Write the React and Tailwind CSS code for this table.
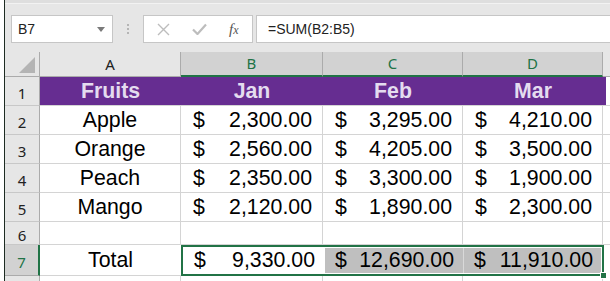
import React from "react";

const data = [
  ["Apple", "2,300.00", "3,295.00", "4,210.00"],
  ["Orange", "2,560.00", "4,205.00", "3,500.00"],
  ["Peach", "2,350.00", "3,300.00", "1,900.00"],
  ["Mango", "2,120.00", "1,890.00", "2,300.00"],
];

const cellFont = { fontFamily: '"Liberation Sans", Arial, sans-serif' };

function RowHead({ n, h, selected }) {
  return (
    <div
      className={`w-[35px] shrink-0 flex items-center justify-center border-b border-r box-border text-[15px] leading-none ${
        selected
          ? "bg-[#d2d2d2] border-b-[#ababab] border-r-2 border-r-[#217346] text-[#217346]"
          : "bg-[#e6e6e6] border-b-[#c8c8c8] border-r-[#ababab] text-[#222]"
      }`}
      style={{ height: h, fontFamily: '"Noto Sans", sans-serif' }}
    >
      <span className="pt-[4px]">{n}</span>
    </div>
  );
}

function Money({ v, w, bg }) {
  return (
    <div
      className={`shrink-0 flex items-end justify-between pl-[12px] pr-[10px] pb-[3px] border-r border-b border-[#d4d4d4] text-[21.3px] leading-none text-black ${bg || ""}`}
      style={{ width: w, ...cellFont }}
    >
      <span>$</span>
      <span>{v}</span>
    </div>
  );
}

export default function App() {
  return (
    <div className="w-[610px] h-[281px] flex overflow-hidden bg-white">
      <div className="w-[4px] shrink-0 bg-white" />
      <div className="w-[1px] shrink-0 bg-[#1d2b22]" />
      <div className="flex-1 flex flex-col bg-[#e6e6e6] min-w-0">
        {/* top band */}
        <div className="h-[3px] bg-[#dedede]" />
        <div className="h-[1px] bg-[#f2f2f2]" />
        <div className="h-[11px]" />
        {/* formula bar */}
        <div className="h-[28px] flex items-stretch" style={cellFont}>
          <div className="w-[6px] shrink-0" />
          <div className="w-[102px] shrink-0 bg-white border border-[#c6c6c6] flex items-center justify-between pl-[6px] pr-[7px]">
            <span className="text-[14px] text-[#222]">B7</span>
            <svg width="8" height="5" viewBox="0 0 8 5">
              <path d="M0 0 H8 L4 5 Z" fill="#7a7a7a" />
            </svg>
          </div>
          <div className="w-[30px] shrink-0 flex flex-col items-center justify-center gap-[2px]">
            <div className="w-[2px] h-[2px] bg-[#b5b5b5]" />
            <div className="w-[2px] h-[2px] bg-[#b5b5b5]" />
            <div className="w-[2px] h-[2px] bg-[#b5b5b5]" />
          </div>
          <div className="w-[110px] shrink-0 bg-white border border-[#c6c6c6] flex items-center pl-[13px]">
            <svg width="13" height="13" viewBox="0 0 13 13">
              <path d="M1 1 L12 12 M12 1 L1 12" stroke="#bdbdbd" strokeWidth="1.4" />
            </svg>
            <svg width="15" height="12" viewBox="0 0 15 12" className="ml-[22px]">
              <path d="M1 6.5 L5.5 11 L14 1.5" stroke="#bdbdbd" strokeWidth="2.2" fill="none" />
            </svg>
            <span
              className="ml-[22px] text-[15px] italic text-[#555]"
              style={{ fontFamily: '"Liberation Serif", serif' }}
            >
              f<span className="text-[12px]">x</span>
            </span>
          </div>
          <div className="w-[3px] shrink-0" />
          <div className="flex-1 bg-white border border-[#c6c6c6] border-r-0 flex items-center pl-[11px]">
            <span className="text-[14px] text-[#222]">=SUM(B2:B5)</span>
          </div>
        </div>
        <div className="h-[9px]" />
        {/* column headers */}
        <div
          className="h-[25px] flex text-[15px]"
          style={{ fontFamily: '"Noto Sans", sans-serif' }}
        >
          <div className="w-[35px] shrink-0 border-r border-b border-[#ababab] bg-[#e6e6e6] flex items-end justify-end pr-[4px] pb-[3px]">
            <svg width="16" height="16" viewBox="0 0 16 16">
              <path d="M16 0 L16 16 L0 16 Z" fill="#b4b4b4" />
            </svg>
          </div>
          <div className="w-[141px] shrink-0 border-r border-b border-[#ababab] bg-[#e6e6e6] flex items-center justify-center text-[#222]">
            A
          </div>
          {[
            ["B", 142],
            ["C", 140],
            ["D", 140],
          ].map(([c, w]) => (
            <div
              key={c}
              className="shrink-0 border-r border-[#ababab] border-b-2 border-b-[#217346] bg-[#d2d2d2] flex items-center justify-center text-[#217346]"
              style={{ width: w }}
            >
              {c}
            </div>
          ))}
          <div className="flex-1 border-b border-[#ababab] bg-[#e6e6e6]" />
        </div>
        {/* row 1 */}
        <div className="h-[29px] flex">
          <RowHead n={1} h={29} />
          <div
            className="w-[566px] shrink-0 flex bg-[#662d91] text-[21.3px] leading-none font-bold text-[#e4dcef] border-b border-[#d4d4d4]"
            style={cellFont}
          >
            {[
              ["Fruits", 141],
              ["Jan", 142],
              ["Feb", 140],
              ["Mar", 140],
            ].map(([t, w]) => (
              <div key={t} className="shrink-0 flex items-end justify-center pb-[3px]" style={{ width: w }}>
                {t}
              </div>
            ))}
          </div>
          <div className="flex-1 bg-white border-b border-[#d4d4d4]" />
        </div>
        {data.map((r, i) => (
          <div key={r[0]} className="h-[29px] flex bg-white">
            <RowHead n={i + 2} h={29} />
            <div
              className="w-[141px] shrink-0 flex items-end justify-center pb-[3px] border-r border-b border-[#d4d4d4] text-[21.3px] leading-none text-black"
              style={cellFont}
            >
              {r[0]}
            </div>
            <Money v={r[1]} w={142} />
            <Money v={r[2]} w={140} />
            <Money v={r[3]} w={140} />
            <div className="flex-1 border-b border-[#d4d4d4]" />
          </div>
        ))}
        {/* row 6 */}
        <div className="h-[23px] flex bg-white">
          <RowHead n={6} h={23} />
          {[141, 142, 140, 140].map((w, i) => (
            <div key={i} className="shrink-0 border-r border-b border-[#d4d4d4]" style={{ width: w }} />
          ))}
          <div className="flex-1 border-b border-[#d4d4d4]" />
        </div>
        {/* row 7 */}
        <div className="h-[31px] flex bg-white">
          <RowHead n={7} h={31} selected />
          <div
            className="w-[141px] shrink-0 flex items-end justify-center pb-[4px] border-b border-[#d4d4d4] text-[21.3px] leading-none text-black"
            style={cellFont}
          >
            Total
          </div>
          <div className="relative w-[423px] shrink-0 flex border-2 border-[#217346]">
            <div
              className="w-[141px] shrink-0 flex items-end justify-between pl-[11px] pr-[9px] pb-[3px] text-[21.3px] leading-none text-black bg-white"
              style={cellFont}
            >
              <span>$</span>
              <span>9,330.00</span>
            </div>
            <div className="flex-1 flex border border-white">
              <div
                className="w-[139px] shrink-0 flex items-end justify-between pl-[10px] pr-[9px] pb-[2px] text-[21.3px] leading-none text-black bg-[#bfbfbf] border-r border-[#d9d9d9]"
                style={cellFont}
              >
                <span>$</span>
                <span>12,690.00</span>
              </div>
              <div
                className="flex-1 flex items-end justify-between pl-[10px] pr-[8px] pb-[2px] text-[21.3px] leading-none text-black bg-[#bfbfbf]"
                style={cellFont}
              >
                <span>$</span>
                <span>11,910.00</span>
              </div>
            </div>
            <div className="absolute right-[-5px] bottom-[-5px] w-[7px] h-[7px] bg-[#217346] border border-white" />
          </div>
          <div className="flex-1" />
        </div>
        {/* row 8 partial */}
        <div className="flex-1 flex bg-white">
          <div className="w-[35px] shrink-0 bg-[#e6e6e6] border-r border-[#ababab]" />
          <div className="w-[141px] shrink-0 border-r border-[#d4d4d4]" />
          <div className="w-[142px] shrink-0 border-r border-[#d4d4d4]" />
          <div className="w-[140px] shrink-0 border-r border-[#d4d4d4]" />
          <div className="w-[140px] shrink-0 border-r border-[#d4d4d4]" />
        </div>
      </div>
    </div>
  );
}
